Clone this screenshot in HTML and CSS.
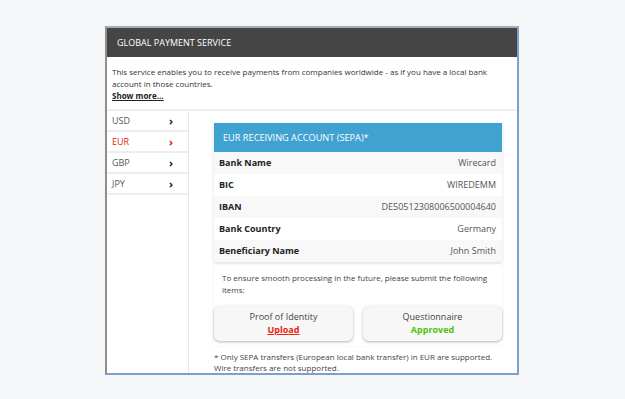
FILE: index.html
```html
<!DOCTYPE html>
<html lang="en">
<head>
    <meta charset="UTF-8">
    <meta name="viewport" content="width=device-width, initial-scale=1.0">
    <title>Global Payment Service</title>
    <link rel="stylesheet" href="styles.css">
</head>
<body>
    <div class="frame">
        <header class="top-bar">GLOBAL PAYMENT SERVICE</header>

        <div class="intro">
            <p>This service enables you to receive payments from companies worldwide - as if you have a local bank account in those countries.</p>
            <a href="#" class="show-more">Show more...</a>
        </div>

        <div class="main">
            <!-- currency list -->
            <ul class="currencies">
                <li><span>USD</span><span class="chev">&rsaquo;</span></li>
                <li class="active"><span>EUR</span><span class="chev">&rsaquo;</span></li>
                <li><span>GBP</span><span class="chev">&rsaquo;</span></li>
                <li><span>JPY</span><span class="chev">&rsaquo;</span></li>
            </ul>

            <div class="content">
                <div class="account-card">
                    <div class="card-head">EUR RECEIVING ACCOUNT (SEPA)*</div>
                    <div class="row"><span class="label">Bank Name</span><span class="value">Wirecard</span></div>
                    <div class="row"><span class="label">BIC</span><span class="value">WIREDEMM</span></div>
                    <div class="row"><span class="label">IBAN</span><span class="value">DE50512308006500004640</span></div>
                    <div class="row"><span class="label">Bank Country</span><span class="value">Germany</span></div>
                    <div class="row"><span class="label">Beneficiary Name</span><span class="value">John Smith</span></div>
                </div>

                <div class="todo">
                    <p>To ensure smooth processing in the future, please submit the following items:</p>
                    <div class="todo-items">
                        <div class="todo-btn">
                            <span>Proof of Identity</span>
                            <a href="#" class="status upload">Upload</a>
                        </div>
                        <div class="todo-btn">
                            <span>Questionnaire</span>
                            <span class="status approved">Approved</span>
                        </div>
                    </div>
                </div>

                <p class="note">* Only SEPA transfers (European local bank transfer) in EUR are supported. Wire transfers are not supported.</p>
            </div>
        </div>
    </div>
</body>
</html>
```

FILE: styles.css
```css
body {
    margin: 0;
    background-color: #f5f6f8;
    font-family: "Open Sans", "Liberation Sans", sans-serif;
    color: #333;
}

.frame {
    margin: 26px 0 0 105px;
    width: 410px;
    height: 345px;
    overflow: hidden;
    background-color: #fff;
    border: 2px solid #7e9ecb;
    border-top-color: #a4aebb;
    border-left-color: #8f8f8f;
}

.top-bar {
    height: 29px;
    line-height: 29px;
    padding-left: 10px;
    background-color: #454545;
    color: #fff;
    font-size: 9px;
}

.intro {
    padding: 9px 5px 7px;
    font-size: 8px;
    line-height: 12px;
    color: #333;
    border-bottom: 2px solid #eeeeee;
}

.intro p {
    margin: 0;
}

.show-more {
    color: #222;
    font-weight: bold;
}

.main {
    display: flex;
}

/* currency list */
.currencies {
    list-style: none;
    margin: 0;
    padding: 0;
    width: 81px;
    border-right: 1px solid #e6e6e6;
    height: 300px;
}

.currencies li {
    display: flex;
    justify-content: space-between;
    align-items: center;
    height: 19px;
    padding: 0 15px 0 5px;
    font-size: 9px;
    color: #555;
    border-bottom: 2px solid #eeeeee;
}

.currencies li.active {
    color: #e8200c;
}

.chev {
    font-weight: bold;
    font-size: 11px;
    color: #222;
}

.currencies li.active .chev {
    color: #e8200c;
}

.content {
    flex: 1;
    padding: 12px 15px 0 25px;
}

.account-card {
    box-shadow: 0 1px 3px rgba(0, 0, 0, 0.15);
}

.card-head {
    height: 29px;
    line-height: 29px;
    padding-left: 9px;
    background-color: #3fa2d1;
    color: #fff;
    font-size: 9.2px;
}

.row {
    display: flex;
    justify-content: space-between;
    height: 22px;
    line-height: 22px;
    padding: 0 6px 0 5px;
    font-size: 9px;
}

.row:nth-child(even) {
    background-color: #f8f8f8;
}

.label {
    font-weight: bold;
    color: #222;
}

.value {
    color: #555;
}

.todo {
    margin-top: 2px;
    padding: 8px 0 5px;
    box-shadow: 0 0 3px rgba(0, 0, 0, 0.06);
}

.todo p {
    margin: 0 8px 10px;
    font-size: 8px;
    line-height: 12px;
    color: #444;
}

.todo-items {
    display: flex;
    gap: 10px;
}

.todo-btn {
    flex: 1;
    display: flex;
    flex-direction: column;
    align-items: center;
    height: 35px;
    padding-top: 4px;
    box-sizing: border-box;
    background-color: #f7f7f7;
    border-radius: 6px;
    box-shadow: 0 1px 3px rgba(0, 0, 0, 0.3);
    font-size: 9px;
    line-height: 13px;
    color: #444;
}

.status {
    font-weight: bold;
}

.upload {
    color: #e8230f;
}

.approved {
    color: #4fc40a;
}

.note {
    margin: 5px 0 0 0;
    font-size: 8px;
    line-height: 11px;
    color: #444;
}
```
